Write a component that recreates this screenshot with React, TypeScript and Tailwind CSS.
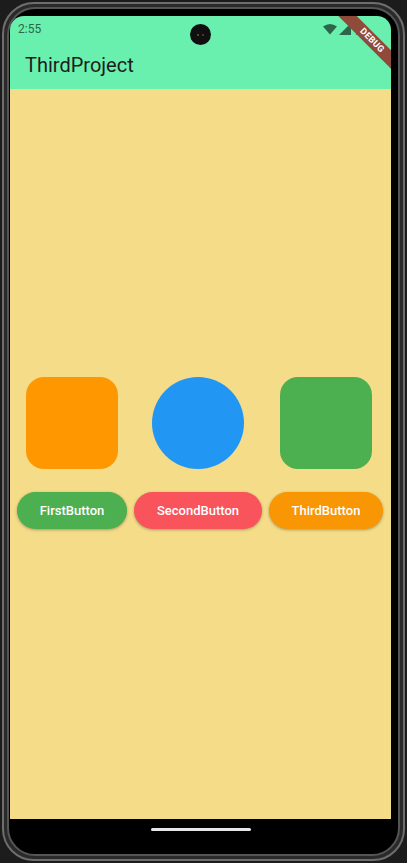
import { ReactNode } from "react";

const font = { fontFamily: "Roboto, 'Noto Sans', sans-serif" };

function Shape({ className = "" }: { className?: string }) {
  return <div className={`w-[92px] h-[92px] shrink-0 ${className}`} />;
}

function PillButton({ children, className = "" }: { children: ReactNode; className?: string }) {
  return (
    <button
      className={`h-[37px] shrink-0 rounded-full text-white text-[13px] font-medium shadow-[0_1px_3px_rgba(0,0,0,0.3)] flex items-center justify-center ${className}`}
    >
      {children}
    </button>
  );
}

function StatusIcons() {
  return (
    <div className="flex items-center gap-[2px] mr-[28px]">
      <svg width="14" height="11" viewBox="0 0 14 11">
        <path d="M7 10.5 L0 2.6 Q7 -2.4 14 2.6 Z" fill="#2c664a" />
      </svg>
      <svg width="12" height="12" viewBox="0 0 12 12">
        <path d="M12 0 L12 12 L0 12 Z" fill="#2c664a" />
      </svg>
      <svg width="7" height="12" viewBox="0 0 7 12" className="ml-[3px]">
        <rect x="0" y="1" width="7" height="11" rx="1" fill="#2c664a" />
        <rect x="2" y="0" width="3" height="1.5" fill="#2c664a" />
      </svg>
    </div>
  );
}

export default function App() {
  return (
    <div className="w-[407px] h-[863px] bg-[#1c1c1c] p-[2px]" style={font}>
      <div className="h-full rounded-[32px] border-2 border-[#6e6e6e] bg-[#2a2a2a] p-[3px]">
        <div className="h-full rounded-[28px] border-2 border-[#555] bg-black pt-[7px] pb-[12px] pl-[1px] pr-[7px]">
          {/* screen */}
          <div className="relative h-full rounded-[14px] overflow-hidden flex flex-col">
            <header className="bg-[#69f0ae] h-[73px] shrink-0 flex flex-col">
              <div className="h-[26px] flex items-center justify-between pl-[8px]">
                <span className="text-[12px] text-[#2c664a] leading-none">2:55</span>
                <StatusIcons />
              </div>
              <div className="flex-1 flex items-center pl-[15px] pb-[2px]">
                <h1 className="text-[20px] text-[#1d1d1d] leading-none">ThirdProject</h1>
              </div>
            </header>

            <main className="flex-1 bg-[#f4dc88] flex flex-col justify-center gap-[23px] pb-[2px]">
              <div className="flex items-center pl-[16px]">
                <Shape className="bg-[#ff9800] rounded-[18px]" />
                <Shape className="bg-[#2196f3] rounded-full ml-[34px]" />
                <Shape className="bg-[#4caf50] rounded-[18px] ml-[36px]" />
              </div>
              <div className="flex items-center pl-[7px] gap-[7px]">
                <PillButton className="w-[110px] bg-[#4caf50]">FirstButton</PillButton>
                <PillButton className="w-[128px] bg-[#f9535b]">SecondButton</PillButton>
                <PillButton className="w-[114px] bg-[#f99604]">ThirdButton</PillButton>
              </div>
            </main>

            <div className="h-[23px] bg-black shrink-0 flex items-center justify-center pb-[3px]">
              <div className="w-[100px] h-[3px] rounded-full bg-[#e6e6e6]" />
            </div>

            {/* camera punch hole */}
            <div className="absolute left-[180px] top-[8px] w-[21px] h-[21px] rounded-full bg-[#101010] flex items-center justify-center gap-[3px]">
              <span className="w-[2px] h-[2px] rounded-full bg-[#7a5a2a]" />
              <span className="w-[2px] h-[2px] rounded-full bg-[#7a3a2a]" />
            </div>

            {/* debug banner */}
            <div className="absolute top-0 right-0 w-[64px] h-[64px] overflow-hidden pointer-events-none">
              <div className="absolute left-[-3px] top-[18px] w-[96px] h-[13px] bg-[#8f4a3a] rotate-45 flex items-center justify-center">
                <span className="text-white text-[9px] font-bold leading-none tracking-[0.3px]">DEBUG</span>
              </div>
            </div>
          </div>
        </div>
      </div>
    </div>
  );
}
